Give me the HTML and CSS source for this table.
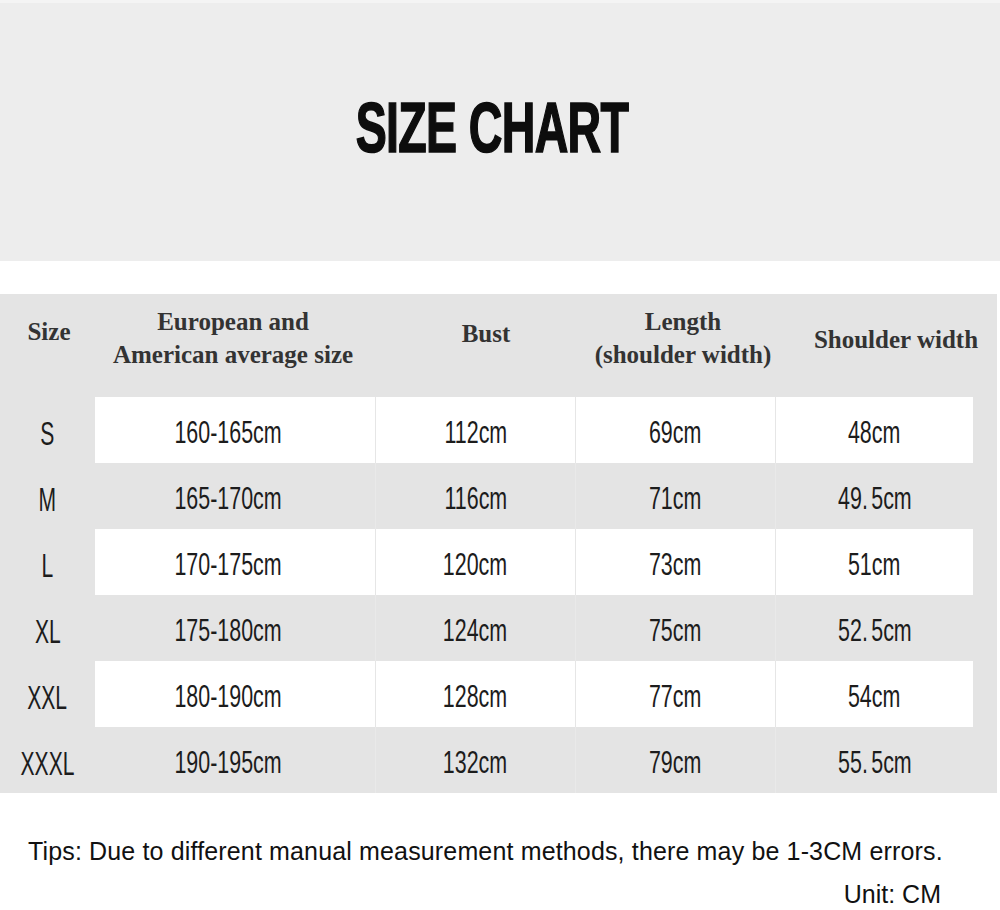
FILE: index.html
```html
<!DOCTYPE html>
<html lang="en">
<head>
<meta charset="utf-8">
<title>Size Chart</title>
<link rel="stylesheet" href="styles.css">
</head>
<body>
<header class="banner">
  <h1 class="title"><span class="squeeze">SIZE CHART</span></h1>
</header>

<section class="chart">
  <div class="row head">
    <div class="hcell h-size">Size</div>
    <div class="hcell h-euro">European and<br>American average size</div>
    <div class="hcell h-bust">Bust</div>
    <div class="hcell h-len">Length<br>(shoulder width)</div>
    <div class="hcell h-sh">Shoulder width</div>
  </div>

  <div class="row light">
    <div class="size"><span class="sq-size">S</span></div>
    <div class="cell c1"><span class="sq">160-165cm</span></div>
    <div class="cell"><span class="sq">112cm</span></div>
    <div class="cell"><span class="sq">69cm</span></div>
    <div class="cell"><span class="sq">48cm</span></div>
    <div class="edge"></div>
  </div>
  <div class="row">
    <div class="size"><span class="sq-size">M</span></div>
    <div class="cell c1"><span class="sq">165-170cm</span></div>
    <div class="cell"><span class="sq">116cm</span></div>
    <div class="cell"><span class="sq">71cm</span></div>
    <div class="cell"><span class="sq">49. 5cm</span></div>
    <div class="edge"></div>
  </div>
  <div class="row light">
    <div class="size"><span class="sq-size">L</span></div>
    <div class="cell c1"><span class="sq">170-175cm</span></div>
    <div class="cell"><span class="sq">120cm</span></div>
    <div class="cell"><span class="sq">73cm</span></div>
    <div class="cell"><span class="sq">51cm</span></div>
    <div class="edge"></div>
  </div>
  <div class="row">
    <div class="size"><span class="sq-size">XL</span></div>
    <div class="cell c1"><span class="sq">175-180cm</span></div>
    <div class="cell"><span class="sq">124cm</span></div>
    <div class="cell"><span class="sq">75cm</span></div>
    <div class="cell"><span class="sq">52. 5cm</span></div>
    <div class="edge"></div>
  </div>
  <div class="row light">
    <div class="size"><span class="sq-size">XXL</span></div>
    <div class="cell c1"><span class="sq">180-190cm</span></div>
    <div class="cell"><span class="sq">128cm</span></div>
    <div class="cell"><span class="sq">77cm</span></div>
    <div class="cell"><span class="sq">54cm</span></div>
    <div class="edge"></div>
  </div>
  <div class="row">
    <div class="size"><span class="sq-size">XXXL</span></div>
    <div class="cell c1"><span class="sq">190-195cm</span></div>
    <div class="cell"><span class="sq">132cm</span></div>
    <div class="cell"><span class="sq">79cm</span></div>
    <div class="cell"><span class="sq">55. 5cm</span></div>
    <div class="edge"></div>
  </div>
</section>

<footer class="notes">
  <p class="tips">Tips: Due to different manual measurement methods, there may be 1-3CM errors.</p>
  <p class="unit">Unit: CM</p>
</footer>
</body>
</html>
```

FILE: styles.css
```css
html, body {
  margin: 0;
  padding: 0;
  background: #ffffff;
}

body {
  width: 1000px;
  font-family: "Liberation Sans", Arial, sans-serif;
  color: #111;
}

/* ---------- banner ---------- */
.banner {
  height: 258px;
  border-top: 3px solid #f4f4f4;
  background: #ededed;
  display: flex;
  justify-content: center;
  align-items: flex-start;
}

.title {
  margin: 0;
  padding-top: 85px;
  padding-right: 16px;
  font-family: "Liberation Sans", Arial, sans-serif;
  font-weight: 700;
  font-size: 70px;
  line-height: 80px;
  color: #0d0d0d;
  -webkit-text-stroke: 1.6px #0d0d0d;
}

.title .squeeze {
  display: inline-block;
  transform: scaleX(0.665);
  transform-origin: center;
  letter-spacing: -1px;
}

/* ---------- chart ---------- */
.chart {
  margin-top: 33px;
  width: 997px;
  background: #e4e4e4;
}

.row {
  display: grid;
  grid-template-columns: 95px 280px 200px 200px 198px 24px;
  height: 66px;
}

.row.head {
  height: 103px;
  grid-template-columns: 95px 280px 200px 200px 222px;
}

.hcell {
  font-family: "Liberation Serif", "Times New Roman", serif;
  font-weight: 700;
  font-size: 25px;
  line-height: 33px;
  color: #333;
  text-align: center;
  white-space: nowrap;
}

.h-size { padding-top: 21px; padding-left: 3px; }
.h-euro { padding-top: 11px; padding-right: 4px; }
.h-bust { padding-top: 23px; padding-left: 22px; }
.h-len  { padding-top: 11px; padding-left: 16px; }
.h-sh   { padding-top: 29px; padding-left: 20px; }

.size,
.cell {
  display: flex;
  align-items: center;
  justify-content: center;
}

.cell + .cell {
  border-left: 1px solid #e9e9e9;
}

.row.light .cell {
  background: #ffffff;
}

.row.light .cell + .cell {
  border-left: 1px solid #e6e6e6;
}

.cell.c1 {
  padding-right: 14px;
}

.sq,
.sq-size {
  display: inline-block;
  font-family: "Liberation Sans", Arial, sans-serif;
  color: #1c1c1c;
  white-space: nowrap;
  transform-origin: center;
}

.sq {
  font-size: 32px;
  line-height: 40px;
  transform: scaleX(0.67);
  padding-top: 4px;
  word-spacing: -4px;
}

.sq-size {
  font-size: 34px;
  line-height: 40px;
  transform: scaleX(0.62);
  padding-top: 6px;
}

/* ---------- notes ---------- */
.notes {
  padding-top: 44px;
}

.tips,
.unit {
  margin: 0;
  font-family: "Liberation Sans", Arial, sans-serif;
  font-size: 25px;
  line-height: 28px;
  color: #111;
  white-space: nowrap;
}

.tips {
  padding-left: 28px;
  letter-spacing: 0.15px;
}

.unit {
  margin-top: 15px;
  text-align: right;
  padding-right: 59px;
}
```
